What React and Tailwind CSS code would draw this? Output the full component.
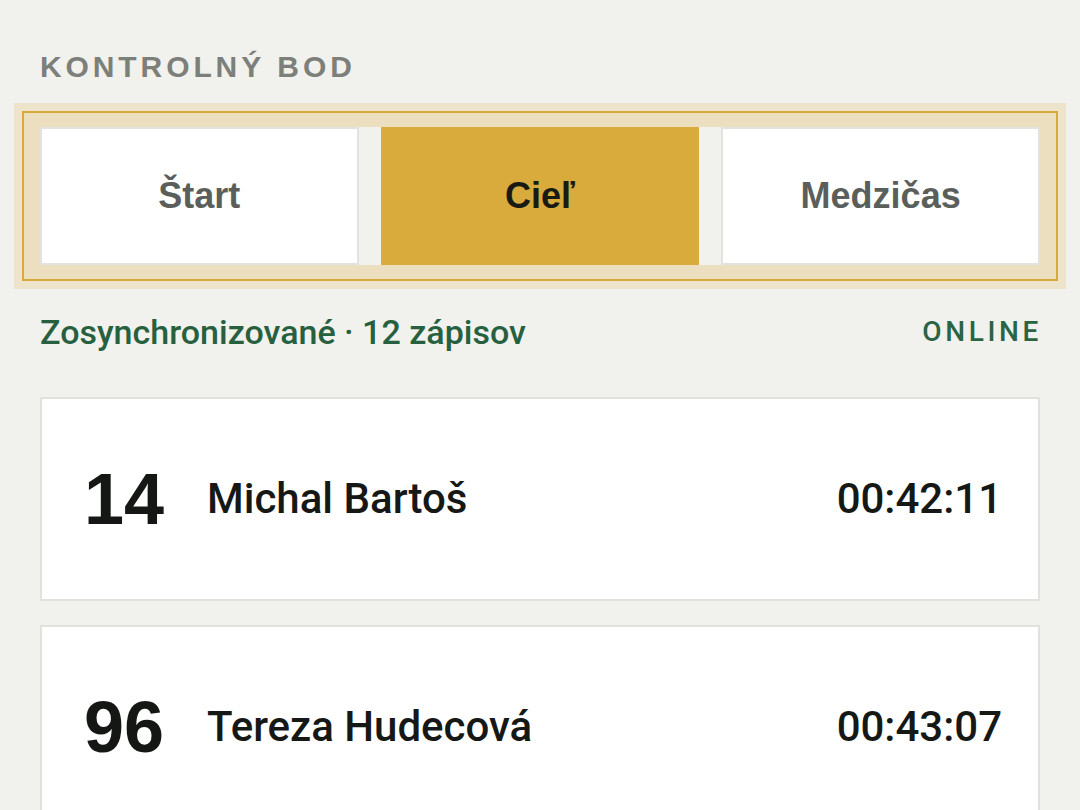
import React from 'react';

const modes = [
  { id: 'start', label: 'Štart' },
  { id: 'finish', label: 'Cieľ' },
  { id: 'split', label: 'Medzičas' },
];

const entries = [
  { bib: '14', name: 'Michal Bartoš', time: '00:42:11' },
  { bib: '96', name: 'Tereza Hudecová', time: '00:43:07' },
];

function EntryCard({ bib, name, time }) {
  return (
    <div className="flex h-[204px] shrink-0 items-center border-2 border-[#e2e2dd] bg-white pl-[42px] pr-[36px]">
      <span className="w-[82px] font-['Liberation_Sans',Arial,sans-serif] text-[72px] font-bold leading-none text-[#141714]">
        {bib}
      </span>
      <span className="ml-[41px] flex-1 font-['Roboto','Noto_Sans',sans-serif] text-[42px] font-medium leading-none text-[#161816]">
        {name}
      </span>
      <span className="font-['Roboto','Noto_Sans',sans-serif] text-[42px] font-medium leading-none text-[#161816]">
        {time}
      </span>
    </div>
  );
}

export default function App() {
  const active = 'finish';

  return (
    <div className="h-[810px] w-[1080px] overflow-hidden bg-[#f1f1ed] px-10 pt-[52px]">
      <h2 className="font-['Liberation_Sans',Arial,sans-serif] text-[30px] font-bold uppercase leading-[30px] tracking-[0.13em] text-[#7c7f7a]">
        Kontrolný bod
      </h2>

      <div className="-mx-[18px] mt-[29px] border-2 border-[#d9a93a] bg-[#ecdfbf] px-4 py-[14px] shadow-[0_0_0_8px_#eee4cb]">
        <div className="grid grid-cols-3 gap-[22px] bg-[#f1f1ed]">
          {modes.map((m) => (
            <button
              key={m.id}
              type="button"
              className={
                m.id === active
                  ? "flex h-[138px] items-center justify-center border-2 border-[#d9aa3c] bg-[#d9aa3c] font-['Liberation_Sans',Arial,sans-serif] text-[36px] font-bold text-[#1a1a14]"
                  : "flex h-[138px] items-center justify-center border-2 border-[#e2e2de] bg-white font-['Liberation_Sans',Arial,sans-serif] text-[36px] font-bold text-[#5b5f5b]"
              }
            >
              {m.label}
            </button>
          ))}
        </div>
      </div>

      <div className="mt-[30px] flex items-center justify-between">
        <p className="font-['Roboto','Noto_Sans',sans-serif] text-[34px] font-medium leading-[40px] text-[#27603f]">
          Zosynchronizované · 12 zápisov
        </p>
        <span className="-mr-[2px] font-['Roboto','Noto_Sans',sans-serif] text-[28px] font-medium uppercase tracking-[0.13em] text-[#2a6444]">
          Online
        </span>
      </div>

      <div className="mt-[44px] flex flex-col gap-[24px]">
        {entries.map((e) => (
          <EntryCard key={e.bib} {...e} />
        ))}
      </div>
    </div>
  );
}
